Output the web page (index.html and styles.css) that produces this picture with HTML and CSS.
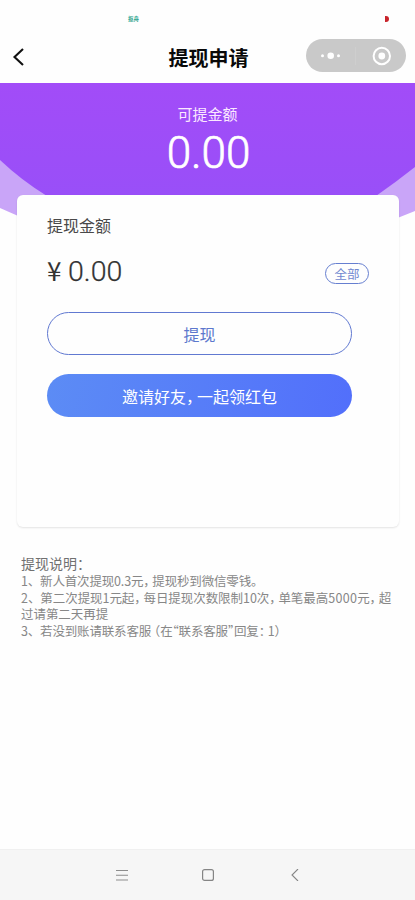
FILE: index.html
```html
<!DOCTYPE html>
<html lang="zh-CN">
<head>
<meta charset="utf-8">
<title>提现申请</title>
<link rel="stylesheet" href="styles.css">
</head>
<body>
<div class="status"><span class="carrier">抠舟</span><span class="battery"></span></div>
<header class="nav">
  <svg class="back" width="12" height="18" viewBox="0 0 12 18"><path d="M11 1 2.5 9l8.5 8" fill="none" stroke="#111" stroke-width="2.1"/></svg>
  <h1>提现申请</h1>
  <svg class="capsule" width="100" height="33" viewBox="0 0 100 33"><rect width="100" height="33" rx="16.5" fill="#c9c9c9"/><g fill="#fff"><circle cx="16.5" cy="16.7" r="1.5"/><circle cx="24.7" cy="16.7" r="3.3"/><circle cx="32.5" cy="16.7" r="1.5"/><circle cx="75.8" cy="17" r="3.4"/></g><path d="M49.5 8v18" stroke="#cecece"/><circle cx="75.8" cy="17" r="8.2" fill="none" stroke="#fff" stroke-width="2"/></svg>
</header>
<section class="hero">
  <svg class="wave" width="415" height="136" viewBox="0 0 415 136"><path d="M0 0H415V128L395 136H25L0 125Z" fill="#c9a5f8"/><path d="M0 0H415V84Q396 99 376 113H47Q21 97 0 77Z" fill="url(#purple)"/><defs><linearGradient id="purple" x2="0" y2="1"><stop stop-color="#a24cf8"/><stop offset="1" stop-color="#994ff8"/></linearGradient></defs></svg>
  <p class="label">可提金额</p>
  <p class="total">0.00</p>
</section>
<main class="card">
  <h2>提现金额</h2>
  <div class="row"><span class="yen">¥</span><span class="amount">0.00</span><button class="all">全部</button></div>
  <button class="btn outline">提现</button>
  <button class="btn fill">邀请好友<span class="half">，</span>一起领红包</button>
</main>
<section class="notes">
  <h3>提现说明：</h3>
  <p class="tight">1、新人首次提现0.3元<span class="half">，</span>提现秒到微信零钱。</p>
  <p>2、第二次提现1元起<span class="half">，</span>每日提现次数限制10次<span class="half">，</span>单笔最高<span class="digits">5000</span>元<span class="half">，</span>超</p>
  <p>过请第二天再提</p>
  <p class="tight">3、若没到账请联系客服<span class="open">（</span>在<span class="quote">“</span>联系客服<span class="quote">”</span>回复<span class="half">：</span>1）</p>
</section>
<footer class="keys">
  <svg width="12" height="12" viewBox="0 0 12 12"><path d="M0 1.5h12M0 6.2h12M0 11h12" stroke="#8d8d8d" stroke-width="1.1"/></svg>
  <svg width="12" height="12" viewBox="0 0 12 12"><rect x=".6" y=".6" width="10.8" height="10.8" rx="2" fill="none" stroke="#858585" stroke-width="1.2"/></svg>
  <svg width="12" height="12" viewBox="0 0 12 12"><path d="M10 0 4 6l6 6" fill="none" stroke="#858585" stroke-width="1.1"/></svg>
</footer>
</body>
</html>
```
FILE: styles.css
```css
* { box-sizing: border-box; margin: 0; padding: 0; }
body { width: 415px; height: 900px; overflow: hidden; display: flex; flex-direction: column; background: #fefefe; font-family: "Noto Sans CJK SC", sans-serif; }
button { font-family: inherit; }
h1, h2, h3 { font-weight: 400; }
.status { height: 30px; display: flex; justify-content: space-between; align-items: flex-start; padding: 16px 26px 0 128px; }
.carrier { font-size: 5.5px; line-height: 6px; font-weight: 700; color: #2ca58d; }
.battery { width: 4px; height: 6px; border-radius: 0 3px 3px 0; background: #c8242b; }
.nav { height: 53px; display: grid; grid-template-columns: 109px 1fr 109px; align-items: center; }
.back { margin: 0 0 0 12px; }
.nav h1 { font-size: 20px; line-height: 28px; font-weight: 700; color: #090909; text-align: center; padding: 2px 0 0 2px; }
.capsule { margin-top: -3px; }
.hero { height: 112px; flex: none; position: relative; text-align: center; color: #fff; padding-top: 20px; }
.wave { position: absolute; left: 0; top: 0; }
.label { position: relative; font-size: 15px; line-height: 22px; color: #fbe9ff; }
.total { position: relative; padding-left: 2px; font: 300 44px/56px Roboto, sans-serif; -webkit-text-stroke: .7px #fff; }
.card { position: relative; flex: none; width: 382px; height: 332px; margin-left: 17px; padding: 19px 30px 20px; background: #fefefe; border-radius: 6px; box-shadow: 0 1px 2px #0000001c; }
.card h2 { font-size: 16px; line-height: 22px; color: #494949; }
.row { display: flex; align-items: center; height: 42px; margin-top: 15px; color: #333; }
.yen { font-size: 26px; width: 21px; line-height: 38px; height: 42px; }
.amount { font: 300 28.5px/42px Roboto, sans-serif; -webkit-text-stroke: .25px #333; }
.all { width: 44px; height: 21px; margin: 2px 0 0 auto; border: 1px solid #667fd0; border-radius: 11px; background: none; color: #7188d0; font-size: 12.5px; line-height: 19px; }
.btn { display: block; width: 305px; height: 43px; border-radius: 22px; font-size: 16px; line-height: 40px; }
.outline { margin-top: 19px; border: 1.5px solid #6179d1; background: none; color: #5d78cd; }
.fill { margin-top: 19px; border: 0; background: linear-gradient(100deg, #5c8cf5, #526ffb); color: #fff; }
.half { font-feature-settings: "halt"; margin-right: 3px; }
.open { font-feature-settings: "halt"; margin-left: 3px; }
.quote { font-feature-settings: "halt"; }
.notes { margin: 27px 0 0 21px; color: #878787; font-size: 12.5px; line-height: 16.6px; white-space: nowrap; }
.notes h3 { font-size: 14px; line-height: 19px; color: #707070; }
.notes p { letter-spacing: -.06px; }
.notes .tight { letter-spacing: -.17px; }
.notes .digits { letter-spacing: .3px; }
.keys { height: 51px; margin-top: auto; display: flex; gap: 74px; align-items: center; background: #f6f6f6; border-top: 1px solid #f0f0f0; padding-left: 116px; }
```
